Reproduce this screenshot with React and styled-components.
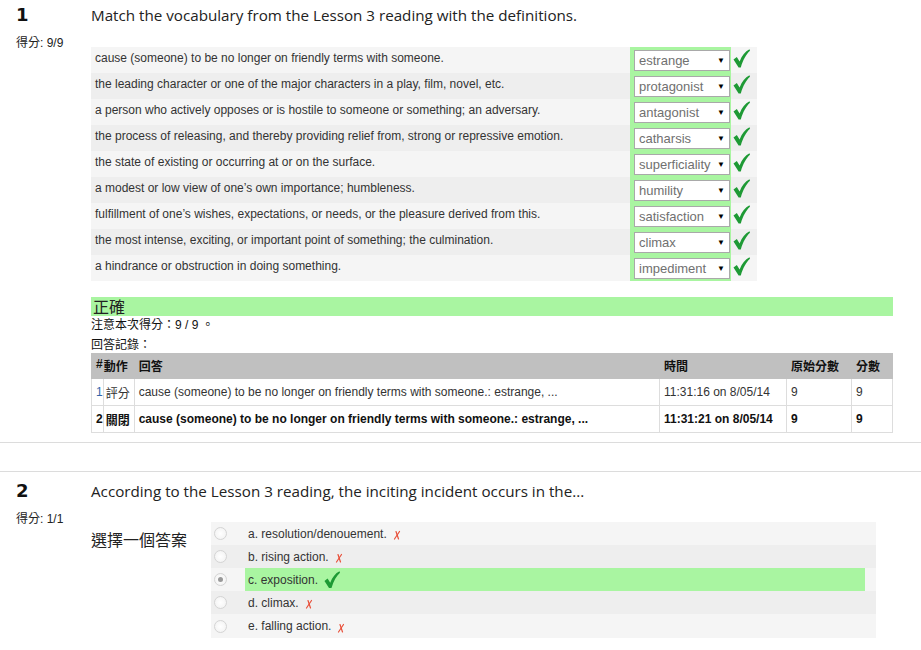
import React from "react";
import styled, { createGlobalStyle } from "styled-components";

const GlobalStyle = createGlobalStyle`
  body {
    margin: 0;
    background: #fff;
    font-family: "Liberation Sans", Arial, "Noto Sans CJK TC", sans-serif;
    font-size: 12px;
    color: #333;
  }
`;

const Page = styled.div`
  width: 921px;
  padding-top: 3px;
`;

const Question = styled.div`
  display: flex;
  padding-bottom: 9px;
  border-bottom: ${(p) => (p.$last ? "none" : "1px solid #dcdcdc")};
  margin-bottom: ${(p) => (p.$last ? "0" : "28px")};
  border-top: ${(p) => (p.$topLine ? "1px solid #dcdcdc" : "none")};
  padding-top: ${(p) => (p.$topLine ? "7px" : "0")};
`;

const Info = styled.div`
  width: 91px;
  flex: none;
  padding-left: 16px;
  box-sizing: border-box;
`;

const Num = styled.div`
  font-family: "DejaVu Sans", "Liberation Sans", sans-serif;
  font-weight: bold;
  font-size: 18px;
  color: #111;
  line-height: 24px;
`;

const Grade = styled.div`
  margin-top: 6px;
  font-family: "Liberation Sans", "Noto Sans CJK TC", sans-serif;
  font-size: 12px;
  color: #222;
`;

const Content = styled.div`
  flex: 1;
  padding-right: 28px;
`;

const QText = styled.div`
  font-family: "Open Sans", sans-serif;
  font-size: 15.2px;
  color: #222;
  line-height: 22px;
  margin-top: 1px;
`;

const MatchTable = styled.table`
  border-collapse: collapse;
  margin-top: 21px;
  width: 666px;
`;

const MatchRow = styled.tr`
  background: ${(p) => (p.$odd ? "#eeeeee" : "#f5f5f5")};
  height: 26px;
`;

const DefCell = styled.td`
  padding: 3px 4px 0;
  vertical-align: top;
  line-height: 16px;
  color: #333;
`;

const ChoiceCell = styled.td`
  width: 96px;
  padding: 2px 1px 2px 4px;
  background: #a9f5a1;
`;

const MarkCell = styled.td`
  width: 24px;
  padding: 0 0 0 2px;
  vertical-align: middle;
`;

const Select = styled.div`
  display: flex;
  align-items: center;
  justify-content: space-between;
  height: 21px;
  box-sizing: border-box;
  border: 1px solid #a9a9a9;
  background: #fff;
  padding: 0 4px;
  font-size: 13px;
  color: #707070;
  &::after {
    content: "▼";
    font-size: 8px;
    color: #000;
  }
`;

const CorrectBar = styled.div`
  margin-top: 16px;
  background: #a9f5a1;
  font-family: "Noto Sans CJK TC", sans-serif;
  font-size: 16px;
  line-height: 19px;
  color: #222;
  padding-left: 2px;
`;

const Note = styled.div`
  font-family: "Liberation Sans", "Noto Sans CJK TC", sans-serif;
  font-size: 12px;
  line-height: 16px;
  color: #111;
  margin-top: ${(p) => p.$gap || 0}px;
`;

const History = styled.table`
  border-collapse: collapse;
  width: 100%;
  font-family: "Liberation Sans", "Noto Sans CJK TC", sans-serif;
  font-size: 12px;
  th {
    background: #c0c0c0;
    text-align: left;
    font-weight: bold;
    height: 21px;
    padding: 3px 4px 0;
    color: #111;
    border: 1px solid #c0c0c0;
    vertical-align: top;
  }
  td {
    border: 1px solid #ddd;
    height: 26px;
    padding: 0 4px;
    color: #333;
  }
`;

const HistRow = styled.tr`
  font-weight: ${(p) => (p.$bold ? "bold" : "normal")};
  td {
    color: ${(p) => (p.$bold ? "#111" : "#333")};
  }
`;

const IdLink = styled.span`
  color: ${(p) => (p.$link ? "#3366aa" : "#111")};
`;

const Answer = styled.div`
  display: flex;
  margin-top: 20px;
`;

const Prompt = styled.div`
  width: 120px;
  flex: none;
  font-family: "Noto Sans CJK TC", sans-serif;
  font-size: 16px;
  color: #222;
  padding-top: 5px;
`;

const Options = styled.div`
  width: 665px;
`;

const Option = styled.div`
  display: flex;
  align-items: center;
  height: 23px;
  background: ${(p) => (p.$odd ? "#eeeeee" : "#f5f5f5")};
  &:last-child {
    height: 24px;
  }
`;

const Radio = styled.span`
  width: 11px;
  height: 11px;
  margin: 0 18px 0 3px;
  border-radius: 50%;
  border: 1px solid #d4d4d4;
  background: radial-gradient(circle, #fff 0%, #f0f0f0 100%);
  flex: none;
  position: relative;
  ${(p) =>
    p.$checked &&
    `&::after {
      content: "";
      position: absolute;
      left: 3px;
      top: 3px;
      width: 5px;
      height: 5px;
      border-radius: 50%;
      background: #999;
    }`}
`;

const OptLabel = styled.div`
  flex: 1;
  margin-right: 11px;
  align-self: stretch;
  display: flex;
  align-items: center;
  padding-left: 3px;
  background: ${(p) => (p.$hit ? "#a9f5a1" : "transparent")};
  color: #333;
  gap: 6px;
`;

const Check = ({ size = 17 }) => (
  <svg width={size} height={size * 1.12} viewBox="0 0 17 19">
    <path
      d="M0.5 10.5 L3.8 8 L6.6 12.5 C9 6.5 12 2.5 16.5 0.3 L17 1.8 C13.2 5.2 10.2 10.5 7.8 18.5 L5.6 18.5 Z"
      fill="#1e9a35"
    />
  </svg>
);

const Cross = () => (
  <svg width="8" height="10" viewBox="0 0 8 10" style={{ marginTop: 3 }}>
    <path d="M3 1.5 L5.5 9" stroke="#e8503a" strokeWidth="1.2" strokeLinecap="round" />
    <path d="M6.5 1.5 L1.5 9" stroke="#e8503a" strokeWidth="1.2" strokeLinecap="round" />
  </svg>
);

const matches = [
  ["cause (someone) to be no longer on friendly terms with someone.", "estrange"],
  ["the leading character or one of the major characters in a play, film, novel, etc.", "protagonist"],
  ["a person who actively opposes or is hostile to someone or something; an adversary.", "antagonist"],
  ["the process of releasing, and thereby providing relief from, strong or repressive emotion.", "catharsis"],
  ["the state of existing or occurring at or on the surface.", "superficiality"],
  ["a modest or low view of one\u2019s own importance; humbleness.", "humility"],
  ["fulfillment of one\u2019s wishes, expectations, or needs, or the pleasure derived from this.", "satisfaction"],
  ["the most intense, exciting, or important point of something; the culmination.", "climax"],
  ["a hindrance or obstruction in doing something.", "impediment"],
];

const options = [
  "a. resolution/denouement.",
  "b. rising action.",
  "c. exposition.",
  "d. climax.",
  "e. falling action.",
];

const App = () => {
  return (
    <Page>
      <GlobalStyle />
      <Question>
        <Info>
          <Num>1</Num>
          <Grade>得分: 9/9</Grade>
        </Info>
        <Content>
          <QText>Match the vocabulary from the Lesson 3 reading with the definitions.</QText>
          <MatchTable>
            <tbody>
              {matches.map(([def, word], i) => (
                <MatchRow key={word} $odd={i % 2 === 1}>
                  <DefCell>{def}</DefCell>
                  <ChoiceCell>
                    <Select>{word}</Select>
                  </ChoiceCell>
                  <MarkCell>
                    <Check />
                  </MarkCell>
                </MatchRow>
              ))}
            </tbody>
          </MatchTable>
          <CorrectBar>正確</CorrectBar>
          <Note $gap={1}>注意本次得分：9 / 9 。</Note>
          <Note $gap={4}>回答記錄：</Note>
          <History>
            <thead>
              <tr>
                <th style={{ width: 4, paddingRight: 0 }}>#</th>
                <th style={{ width: 26, paddingLeft: 0 }}>動作</th>
                <th>回答</th>
                <th style={{ width: 118 }}>時間</th>
                <th style={{ width: 56 }}>原始分數</th>
                <th style={{ width: 32 }}>分數</th>
              </tr>
            </thead>
            <tbody>
              <HistRow>
                <td style={{ paddingRight: 0 }}>
                  <IdLink $link>1</IdLink>
                </td>
                <td style={{ paddingLeft: 2 }}>評分</td>
                <td>cause (someone) to be no longer on friendly terms with someone.: estrange, ...</td>
                <td>11:31:16 on 8/05/14</td>
                <td>9</td>
                <td>9</td>
              </HistRow>
              <HistRow $bold>
                <td style={{ paddingRight: 0 }}>
                  <IdLink>2</IdLink>
                </td>
                <td style={{ paddingLeft: 2 }}>關閉</td>
                <td>cause (someone) to be no longer on friendly terms with someone.: estrange, ...</td>
                <td>11:31:21 on 8/05/14</td>
                <td>9</td>
                <td>9</td>
              </HistRow>
            </tbody>
          </History>
        </Content>
      </Question>
      <Question $last $topLine>
        <Info>
          <Num>2</Num>
          <Grade>得分: 1/1</Grade>
        </Info>
        <Content>
          <QText>According to the Lesson 3 reading, the inciting incident occurs in the...</QText>
          <Answer>
            <Prompt>選擇一個答案</Prompt>
            <Options>
              {options.map((o, i) => (
                <Option key={o} $odd={i % 2 === 1}>
                  <Radio $checked={i === 2} />
                  <OptLabel $hit={i === 2}>
                    {o}
                    {i === 2 ? <Check size={16} /> : <Cross />}
                  </OptLabel>
                </Option>
              ))}
            </Options>
          </Answer>
        </Content>
      </Question>
    </Page>
  );
};

export default App;
